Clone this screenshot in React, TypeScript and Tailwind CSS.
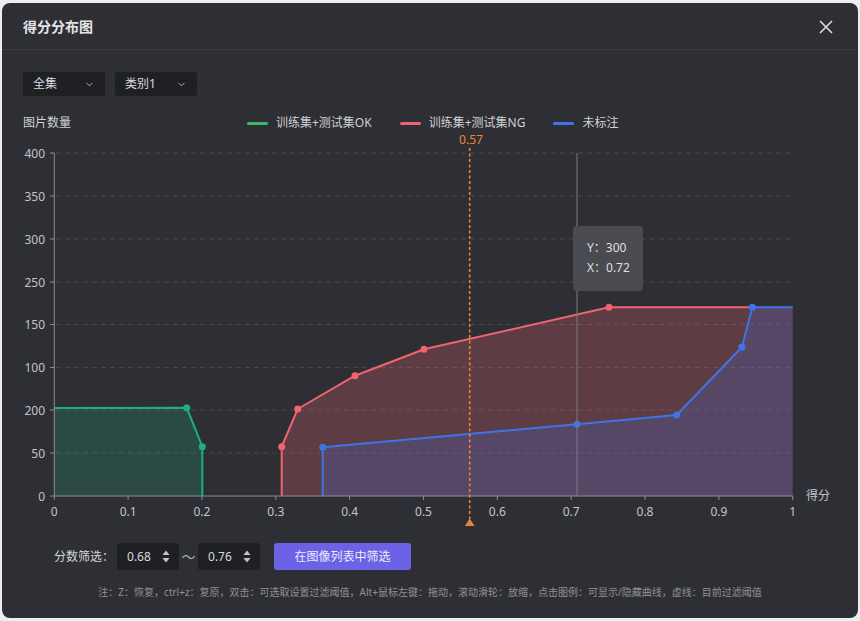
import { X, ChevronDown } from "lucide-react";

type Pt = [number, number];

const yTicks = [
  { label: "400", y: 153 },
  { label: "350", y: 196 },
  { label: "300", y: 239 },
  { label: "250", y: 282 },
  { label: "150", y: 324.5 },
  { label: "100", y: 367.5 },
  { label: "200", y: 410 },
  { label: "50", y: 453 },
  { label: "0", y: 496 },
];

const xTicks = ["0", "0.1", "0.2", "0.3", "0.4", "0.5", "0.6", "0.7", "0.8", "0.9", "1"];
const xs = (i: number) => 54.3 + i * 73.84;

const green: Pt[] = [[54.3, 408], [186.7, 407.7], [202.3, 446.7], [202.3, 496]];
const red: Pt[] = [[281.7, 496], [281.7, 446.7], [297.7, 409], [355, 375.7], [424, 349.3], [609, 307.3], [752.3, 307.3]];
const blue: Pt[] = [[322.7, 496], [322.7, 447.3], [577, 424.3], [676.7, 415], [742, 347], [752.3, 307.3], [792.7, 307.3]];

const toPts = (pts: Pt[]) => pts.map((p) => p.join(",")).join(" ");

const legend = [
  { name: "训练集+测试集OK", color: "bg-[#3fb56b]" },
  { name: "训练集+测试集NG", color: "bg-[#ef6470]" },
  { name: "未标注", color: "bg-[#3f74e6]" },
];

const Spinner = () => (
  <svg width="8" height="13" viewBox="0 0 8 13" className="text-[#c4c5c9]">
    <path d="M4 0.5 L7.5 5 H0.5 Z" fill="currentColor" />
    <path d="M4 12.5 L7.5 8 H0.5 Z" fill="currentColor" />
  </svg>
);

const Chart = () => (
  <svg width="856" height="397" viewBox="0 0 856 397" className="block overflow-visible">
    <g transform="translate(-2,-133)">
      {yTicks.slice(0, -1).map((t) => (
        <line key={t.label} x1="56" x2="793" y1={t.y} y2={t.y} stroke="#46474d" strokeDasharray="5 4" />
      ))}

      <polygon points={toPts([...green, [54.3, 496]])} fill="#1fae7c" fillOpacity="0.22" />
      <polygon points={toPts([...red, [792.7, 307.3], [792.7, 496]])} fill="#f06470" fillOpacity="0.25" />
      <polygon points={toPts([...blue, [792.7, 496]])} fill="#3d72e8" fillOpacity="0.22" />

      <polyline points={toPts(green)} fill="none" stroke="#1fae7c" strokeWidth="2" strokeLinejoin="round" />
      <polyline points={toPts(red)} fill="none" stroke="#ef6470" strokeWidth="2" strokeLinejoin="round" />
      <polyline points={toPts(blue)} fill="none" stroke="#3f74e6" strokeWidth="2" strokeLinejoin="round" />

      {green.slice(1, 3).map(([x, y]) => (
        <circle key={`g${x}`} cx={x} cy={y} r="3.5" fill="#1fae7c" />
      ))}
      {red.slice(1, 6).map(([x, y]) => (
        <circle key={`r${x}`} cx={x} cy={y} r="3.5" fill="#ef6470" />
      ))}
      {blue.slice(1, 6).map(([x, y]) => (
        <circle key={`b${x}`} cx={x} cy={y} r="3.5" fill="#3f74e6" />
      ))}

      {/* axes */}
      <line x1="54.3" x2="54.3" y1="153" y2="496" stroke="#8d8e93" />
      <line x1="54.3" x2="793" y1="496" y2="496" stroke="#8d8e93" />
      {yTicks.map((t) => (
        <g key={t.label}>
          <line x1="50" x2="54.3" y1={t.y} y2={t.y} stroke="#8d8e93" />
          <text x="45" y={t.y + 4.5} textAnchor="end" fontSize="12" fill="#c3c4c8">
            {t.label}
          </text>
        </g>
      ))}
      {xTicks.map((t, i) => (
        <g key={t}>
          <line x1={xs(i)} x2={xs(i)} y1="496" y2="500" stroke="#8d8e93" />
          <text x={xs(i)} y="516" textAnchor="middle" fontSize="12" fill="#c3c4c8">
            {t}
          </text>
        </g>
      ))}
      <text x="806" y="500" fontSize="12" fill="#c3c4c8">
        得分
      </text>

      {/* hover line */}
      <line x1="577" x2="577" y1="153" y2="496" stroke="#7b7c82" />

      {/* threshold */}
      <line x1="469.7" x2="469.7" y1="148" y2="519" stroke="#e8843a" strokeWidth="1.6" strokeDasharray="3 2.5" />
      <path d="M469.7 518.5 L474.5 526 H464.9 Z" fill="#e8843a" />
      <text x="471" y="144" textAnchor="middle" fontSize="12" fill="#e8843a">
        0.57
      </text>
    </g>
  </svg>
);

export default function App() {
  return (
    <div className="min-h-screen bg-[#eceef1] pl-[2px] pt-[3px] font-['Noto_Sans','Noto_Sans_CJK_SC',sans-serif]">
      <div className="w-[856px] h-[615px] rounded-lg bg-[#2e2f34] overflow-hidden">
        <div className="h-[47px] flex items-center justify-between pl-[21px] pr-[21px] pt-[1px] border-b border-[#3b3c42]">
          <h1 className="text-[14px] font-semibold text-[#e4e4e7]">得分分布图</h1>
          <X size={22} strokeWidth={1.9} className="text-[#d6d6da]" />
        </div>

        <div className="relative pt-[22px]">
          <div className="flex gap-[10px] pl-[21px]">
            {["全集", "类别1"].map((s) => (
              <div
                key={s}
                className="w-[82px] h-6 rounded-[3px] bg-[#1f2024] flex items-center justify-between pl-[10px] pr-[10px] text-[12px] text-[#dcdce0]"
              >
                <span>{s}</span>
                <ChevronDown size={11} strokeWidth={2} className="text-[#b9babe]" />
              </div>
            ))}
          </div>

          <div className="h-5 mt-[17px] flex items-center pl-[21px] text-[12px] text-[#d0d1d4]">
            <span className="w-[224px]">图片数量</span>
            <div className="flex items-center gap-[28px]">
              {legend.map((l) => (
                <div key={l.name} className="flex items-center gap-[8px]">
                  <span className={`w-[21px] h-[3px] rounded-full ${l.color}`} />
                  <span>{l.name}</span>
                </div>
              ))}
            </div>
          </div>

          <Chart />

          <div className="absolute left-[571px] top-[176px] w-[70px] h-[65px] rounded-[4px] bg-[#4a4b51] pl-[14px] pt-[12px] text-[12px] leading-[20px] text-[#dedfe2]">
            <div>Y：300</div>
            <div>X：0.72</div>
          </div>

          <div className="mt-[13px] flex items-center pl-[52px] text-[12px] text-[#d3d4d7]">
            <span className="mr-[3px]">分数筛选：</span>
            <div className="w-[62px] h-[27px] rounded-[3px] bg-[#1f2024] flex items-center justify-between pl-[10px] pr-[9px] text-[#d8d9dc]">
              <span>0.68</span>
              <Spinner />
            </div>
            <span className="w-[19px] text-center text-[#a9aaae] text-[14px]">～</span>
            <div className="w-[62px] h-[27px] rounded-[3px] bg-[#1f2024] flex items-center justify-between pl-[10px] pr-[9px] text-[#d8d9dc]">
              <span>0.76</span>
              <Spinner />
            </div>
            <button className="ml-[14px] w-[137px] h-[27px] rounded-[3px] bg-[#6b62e5] text-[12px] text-[#ecebff]">
              在图像列表中筛选
            </button>
          </div>

          <p className="mt-[15px] text-center text-[10px] leading-[14px] text-[#909196]">
            注：Z：恢复，ctrl+z：复原，双击：可选取设置过滤阈值，Alt+鼠标左键：拖动，滚动滑轮：放缩，点击图例：可显示/隐藏曲线，虚线：目前过滤阈值
          </p>
        </div>
      </div>
    </div>
  );
}
